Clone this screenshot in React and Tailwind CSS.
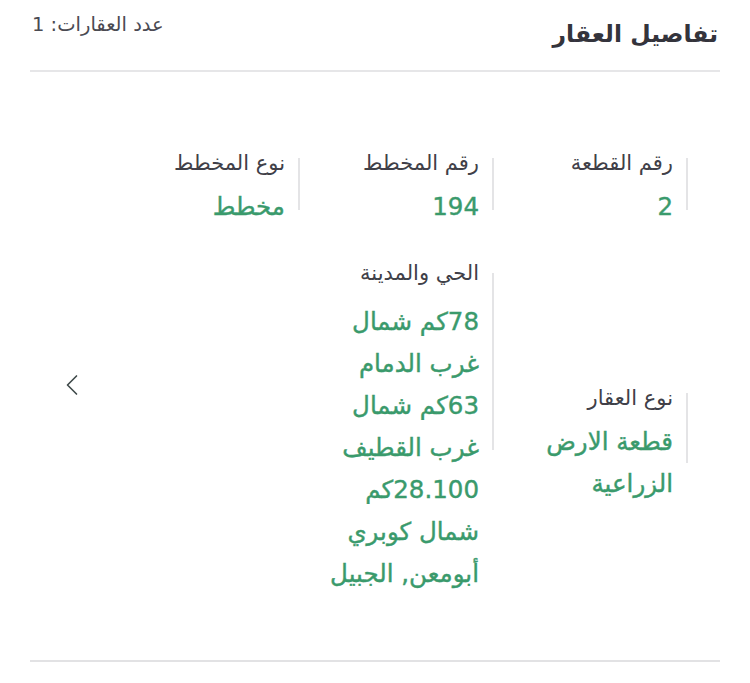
import { ChevronLeft } from 'lucide-react';

const font = { fontFamily: '"DejaVu Sans", "Noto Sans", sans-serif' };

function Field({ label, lines, lineTop, lineH, gap }) {
  return (
    <div className="flex items-start">
      <div className="w-[2px] bg-[#e4e4e6] shrink-0" style={{ height: lineH, marginTop: lineTop }} />
      <div className="pr-[13px] text-right">
        <div className="text-[21px] leading-[26px] text-[#404048]">{label}</div>
        <div className="flex flex-col" style={{ marginTop: gap }}>
          {lines.map((l) => (
            <div
              key={l}
              className="text-[24.5px] leading-[42px] text-[#3a9a6c] whitespace-nowrap [-webkit-text-stroke:0.4px_#3a9a6c]"
            >
              {l}
            </div>
          ))}
        </div>
      </div>
    </div>
  );
}

export default function App() {
  return (
    <div dir="rtl" className="w-[750px] h-[683px] bg-white px-[30px] pt-[12px]" style={font}>
      {/* Header */}
      <div className="flex items-start justify-between h-[60px] border-b-2 border-[#e6e6e8]">
        <h1 className="text-[23.5px] font-bold text-[#34343c] leading-[44px] mr-[2px]">تفاصيل العقار</h1>
        <span className="text-[19.5px] text-[#4a4a52] leading-[26px] ml-[2px]">عدد العقارات: 1</span>
      </div>

      {/* Details */}
      <div className="flex h-[590px] border-b-2 border-[#e2e2e4]">
        <div className="pr-[32px] pt-[78px]">
          <div className="grid grid-cols-[194px_194px_195px] gap-y-[32px]">
            <Field label="رقم القطعة" lines={['2']} lineTop={8} lineH={52} gap={10} />
            <Field label="رقم المخطط" lines={['194']} lineTop={8} lineH={52} gap={10} />
            <Field label="نوع المخطط" lines={['مخطط']} lineTop={8} lineH={52} gap={10} />
            <div className="self-center mt-[35px]">
              <Field label="نوع العقار" lines={['قطعة الارض', 'الزراعية']} lineTop={8} lineH={70} gap={10} />
            </div>
            <Field
              label="الحي والمدينة"
              lines={[
                '78كم شمال',
                'غرب الدمام',
                '63كم شمال',
                'غرب القطيف',
                '28.100كم',
                'شمال كوبري',
                'أبومعن, الجبيل',
              ]}
              lineTop={13}
              lineH={177}
              gap={15}
            />
          </div>
        </div>
        <div className="flex-1 flex justify-end pl-[24px] pt-[295px]">
          <ChevronLeft className="w-[36px] h-[36px] text-[#3f4a4a]" strokeWidth={1.1} />
        </div>
      </div>
    </div>
  );
}
